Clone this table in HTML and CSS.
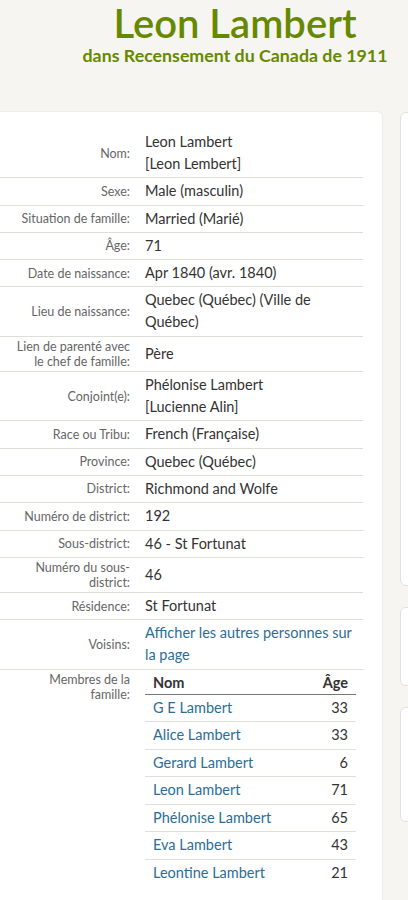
FILE: index.html
```html
<!DOCTYPE html>
<html lang="fr">
<head>
<meta charset="utf-8">
<title>Leon Lambert - Recensement du Canada de 1911</title>
<link rel="stylesheet" href="styles.css">
</head>
<body>
<header class="head">
  <h1 class="title">Leon Lambert</h1>
  <p class="subtitle">dans Recensement du Canada de 1911</p>
</header>
<div class="layout">
  <main class="card">
    <table class="facts">
      <tbody>
        <tr><th>Nom:</th><td>Leon Lambert<br>[Leon Lembert]</td></tr>
        <tr><th>Sexe:</th><td>Male (masculin)</td></tr>
        <tr><th>Situation de famille:</th><td>Married (Marié)</td></tr>
        <tr><th>Âge:</th><td>71</td></tr>
        <tr><th>Date de naissance:</th><td>Apr 1840 (avr. 1840)</td></tr>
        <tr><th>Lieu de naissance:</th><td>Quebec (Québec) (Ville de Québec)</td></tr>
        <tr><th>Lien de parenté avec le chef de famille:</th><td>Père</td></tr>
        <tr><th>Conjoint(e):</th><td>Phélonise Lambert<br>[Lucienne Alin]</td></tr>
        <tr><th>Race ou Tribu:</th><td>French (Française)</td></tr>
        <tr><th>Province:</th><td>Quebec (Québec)</td></tr>
        <tr><th>District:</th><td>Richmond and Wolfe</td></tr>
        <tr><th>Numéro de district:</th><td>192</td></tr>
        <tr><th>Sous-district:</th><td>46 - St Fortunat</td></tr>
        <tr><th>Numéro du sous-district:</th><td>46</td></tr>
        <tr><th>Résidence:</th><td>St Fortunat</td></tr>
        <tr><th>Voisins:</th><td><a class="link" href="#">Afficher les autres personnes sur la page</a></td></tr>
        <tr class="top"><th>Membres de la famille:</th><td>
          <table class="family">
            <thead><tr><th class="fname">Nom</th><th class="fage">Âge</th></tr></thead>
            <tbody>
              <tr><td class="fname"><a class="link" href="#">G E Lambert</a></td><td class="fage">33</td></tr>
              <tr><td class="fname"><a class="link" href="#">Alice Lambert</a></td><td class="fage">33</td></tr>
              <tr><td class="fname"><a class="link" href="#">Gerard Lambert</a></td><td class="fage">6</td></tr>
              <tr><td class="fname"><a class="link" href="#">Leon Lambert</a></td><td class="fage">71</td></tr>
              <tr><td class="fname"><a class="link" href="#">Phélonise Lambert</a></td><td class="fage">65</td></tr>
              <tr><td class="fname"><a class="link" href="#">Eva Lambert</a></td><td class="fage">43</td></tr>
              <tr><td class="fname"><a class="link" href="#">Leontine Lambert</a></td><td class="fage">21</td></tr>
            </tbody>
          </table>
        </td></tr>
      </tbody>
    </table>
  </main>
  <aside class="side">
    <div class="side-card tall"></div>
    <div class="side-card short"></div>
    <div class="side-card mid"></div>
  </aside>
</div>
</body>
</html>
```
FILE: styles.css
```css
html, body {
  margin: 0;
  padding: 0;
}
body {
  background: #f6f5f1;
  font-family: "Lato", "Liberation Sans", sans-serif;
  color: #333;
  overflow-x: hidden;
}
.head {
  padding: 0 0 0 62px;
  text-align: center;
  height: 112px;
  box-sizing: border-box;
}
.title {
  margin: 0;
  font-size: 40px;
  line-height: 46px;
  font-weight: 600;
  color: #678900;
}
.subtitle {
  margin: 0;
  font-size: 17.8px;
  line-height: 18px;
  font-weight: 700;
  color: #678900;
}
.layout {
  display: flex;
  gap: 18px;
  margin-left: -14px;
  align-items: flex-start;
}
.card {
  flex: 0 0 396px;
  background: #fff;
  border-radius: 5px;
  box-shadow: 0 0 2px rgba(0,0,0,0.12);
  padding: 17px 19px 40px 0;
  box-sizing: border-box;
}
.facts {
  width: 100%;
  border-collapse: collapse;
}
.facts > tbody > tr > th,
.facts > tbody > tr > td {
  border-bottom: 1px solid #deddd8;
  padding: 2px 0 2.3px;
  vertical-align: middle;
}
.facts > tbody > tr:last-child > th,
.facts > tbody > tr:last-child > td {
  border-bottom: none;
}
.facts > tbody > tr > th {
  width: 118px;
  padding-left: 26px;
  padding-right: 7px;
  text-align: right;
  font-weight: 400;
  font-size: 12.5px;
  line-height: 15px;
  color: #666;
}
.facts > tbody > tr > td {
  padding-left: 8px;
  font-size: 14.5px;
  line-height: 22px;
  color: #333;
}
.facts > tbody > tr.top > th {
  vertical-align: top;
  padding-top: 2px;
}
.link {
  color: #2a6e96;
  text-decoration: none;
}
.family {
  width: 211px;
  border-collapse: collapse;
  margin: 0 0 6px;
}
.family th {
  font-weight: 700;
  font-size: 14.5px;
  line-height: 22px;
  color: #333;
  border-bottom: 1px solid #777;
  padding: 0 8px;
}
.family td {
  font-size: 14.5px;
  line-height: 22px;
  padding: 2.2px 8px 2.3px;
  border-bottom: 1px solid #e0dfda;
}
.family tbody tr:last-child td {
  border-bottom: none;
}
.family .fname {
  text-align: left;
}
.family .fage {
  text-align: right;
}
.side {
  flex: 0 0 300px;
  display: flex;
  flex-direction: column;
  gap: 21px;
}
.side-card {
  background: #fff;
  border: 1px solid #e2e0da;
  border-radius: 6px;
}
.side-card.tall { height: 472px; }
.side-card.short { height: 77px; }
.side-card.mid { height: 113px; }
```
